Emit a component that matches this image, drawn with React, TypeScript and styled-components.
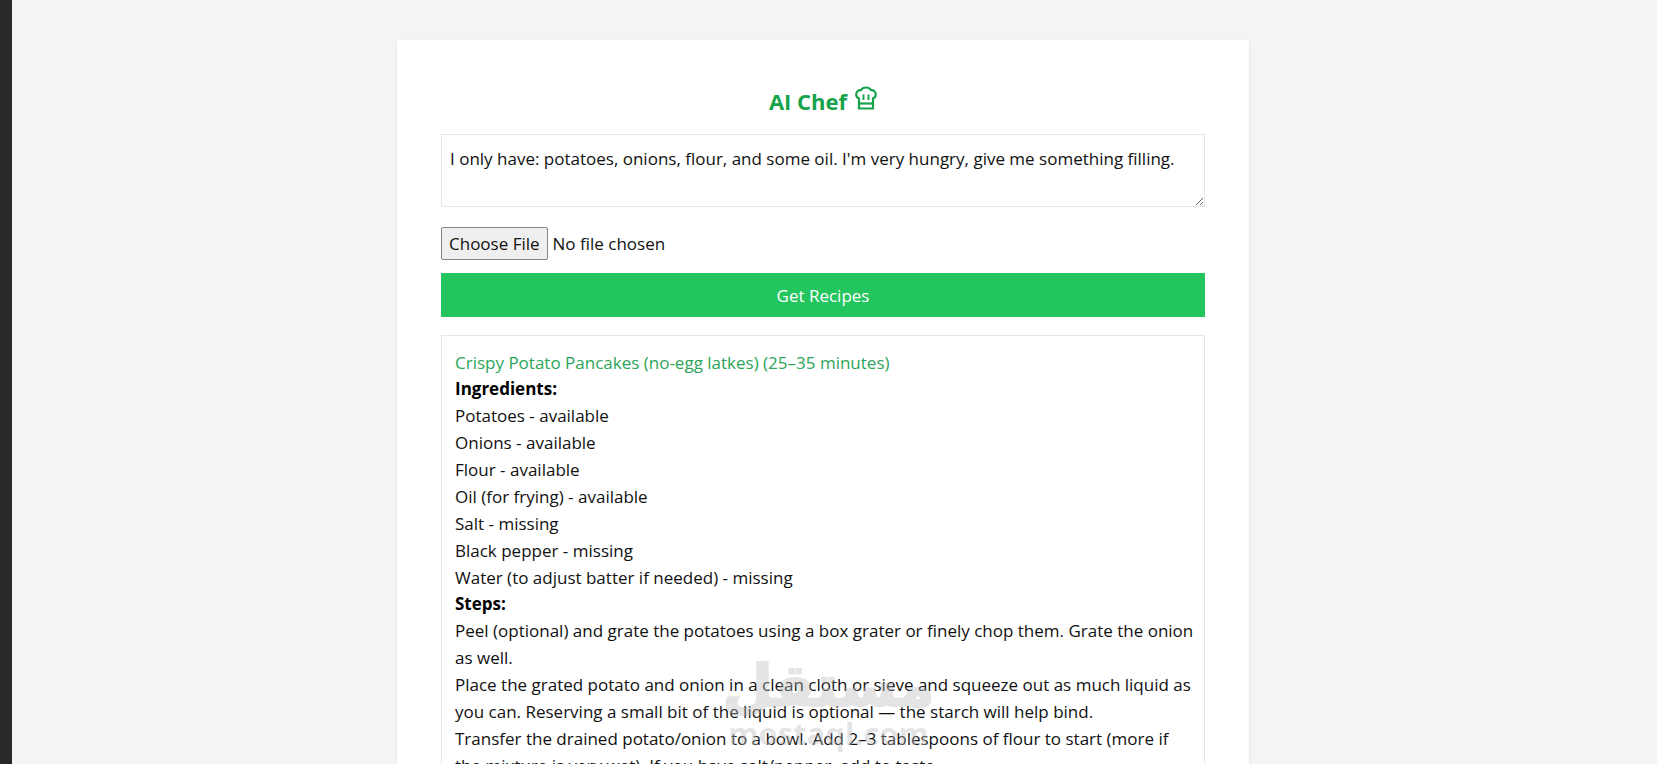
import React from "react";
import styled, { createGlobalStyle } from "styled-components";

const GlobalStyle = createGlobalStyle`
  *, *::before, *::after { box-sizing: border-box; }
  html { scrollbar-width: none; }
  body {
    margin: 0;
    background: #f3f4f6;
    color: #111;
    font-family: "Open Sans", "Noto Sans", sans-serif;
    font-size: 17px;
    line-height: 27px;
  }
`;

const Page = styled.div`
  min-height: 100vh;
  border-left: 12px solid #292929;
  padding: 40px 23px 40px 0;
`;

const Card = styled.main`
  max-width: 852px;
  margin: 0 auto;
  padding: 44px;
  background: #fff;
  border-radius: 4px;
  box-shadow: 0 1px 3px rgba(0, 0, 0, 0.1);
`;

const Title = styled.h1`
  display: flex;
  justify-content: center;
  gap: 8px;
  margin: 0 0 16px;
  color: #16a34a;
  font-size: 22px;
  line-height: 34px;
  font-weight: 700;
`;

const HatIcon = styled.svg`
  width: 22px;
  height: 24px;
  margin-top: 2px;
`;

const Form = styled.form`
  display: flex;
  flex-direction: column;
`;

const Prompt = styled.textarea`
  display: block;
  width: 100%;
  height: 73px;
  margin-bottom: 20px;
  padding: 10px 8px;
  border: 1px solid #e5e7eb;
  background: #fff;
  color: inherit;
  font: inherit;
  resize: vertical;
  outline: none;
`;

const FileInput = styled.input`
  display: block;
  height: 33px;
  margin-bottom: 13px;
  font: inherit;
  &::file-selector-button {
    height: 33px;
    margin: 0 5px 0 0;
    padding: 0 7px;
    border: 1px solid #858585;
    border-radius: 2px;
    background: #efefef;
    color: #111;
    font: inherit;
  }
`;

const Submit = styled.button`
  height: 44px;
  border: 0;
  background: #22c55e;
  color: #fff;
  font: inherit;
`;

const Results = styled.section`
  margin-top: 18px;
  padding: 14px 8px 14px 13px;
  border: 1px solid #e5e7eb;
`;

const RecipeName = styled.h2`
  margin: 0;
  color: #2ba55a;
  font-size: 17px;
  line-height: 26px;
  font-weight: 400;
`;

const Label = styled.h3`
  margin: 0;
  color: #000;
  font-size: 17px;
  line-height: 26px;
  font-weight: 700;
`;

const Lines = styled.ul`
  margin: 0;
  padding: 0;
  list-style: none;
`;

const Watermark = styled.div`
  position: fixed;
  left: 0;
  right: 0;
  bottom: 14px;
  display: flex;
  flex-direction: column;
  align-items: center;
  color: #b8b8b8;
  opacity: 0.38;
  pointer-events: none;
  font-weight: 700;
`;

const WatermarkArabic = styled.div`
  font-family: "DejaVu Sans", sans-serif;
  font-size: 58px;
  line-height: 60px;
  white-space: nowrap;
  -webkit-text-stroke: 2px #b8b8b8;
`;

const WatermarkLatin = styled.div`
  font-family: "Open Sans", sans-serif;
  font-size: 31px;
  line-height: 34px;
`;

const ingredients = [
  "Potatoes - available",
  "Onions - available",
  "Flour - available",
  "Oil (for frying) - available",
  "Salt - missing",
  "Black pepper - missing",
  "Water (to adjust batter if needed) - missing",
];

const steps = [
  "Peel (optional) and grate the potatoes using a box grater or finely chop them. Grate the onion as well.",
  "Place the grated potato and onion in a clean cloth or sieve and squeeze out as much liquid as you can. Reserving a small bit of the liquid is optional — the starch will help bind.",
  "Transfer the drained potato/onion to a bowl. Add 2–3 tablespoons of flour to start (more if the mixture is very wet). If you have salt/pepper, add to taste.",
];

const ChefHat = () => (
  <HatIcon viewBox="0 0 22 24" fill="none" stroke="currentColor" strokeWidth="2.2" aria-hidden="true">
    <path d="M4 22.500V12.500C2.200 11.700 1.200 10.200 1.200 8.400C1.200 5.800 3.300 4 6 4.200C7 2.500 8.800 1.500 11 1.500C13.200 1.500 15 2.500 16 4.200C18.700 4 20.800 5.800 20.800 8.400C20.800 10.200 19.800 11.700 18 12.500V22.500Z" />
    <path d="M4 17.500H18" />
    <path d="M8.500 8.500V14M13.500 8.500V14" strokeWidth="1.900" />
  </HatIcon>
);

export default function App() {
  return (
    <>
      <GlobalStyle />
      <Page>
        <Card>
          <Title>
            AI Chef <ChefHat />
          </Title>
          <Form onSubmit={(e) => e.preventDefault()}>
            <Prompt
              aria-label="Your ingredients"
              spellCheck={false}
              defaultValue="I only have: potatoes, onions, flour, and some oil. I'm very hungry, give me something filling."
            />
            <FileInput type="file" aria-label="Photo of your ingredients" />
            <Submit type="submit">Get Recipes</Submit>
          </Form>
          <Results>
            <RecipeName>Crispy Potato Pancakes (no-egg latkes) (25–35 minutes)</RecipeName>
            <Label>Ingredients:</Label>
            <Lines>
              {ingredients.map((text) => (
                <li key={text}>{text}</li>
              ))}
            </Lines>
            <Label>Steps:</Label>
            <Lines>
              {steps.map((text) => (
                <li key={text}>{text}</li>
              ))}
            </Lines>
          </Results>
        </Card>
      </Page>
      <Watermark>
        <WatermarkArabic lang="ar" dir="rtl">مستقل</WatermarkArabic>
        <WatermarkLatin>mostaql.com</WatermarkLatin>
      </Watermark>
    </>
  );
}
